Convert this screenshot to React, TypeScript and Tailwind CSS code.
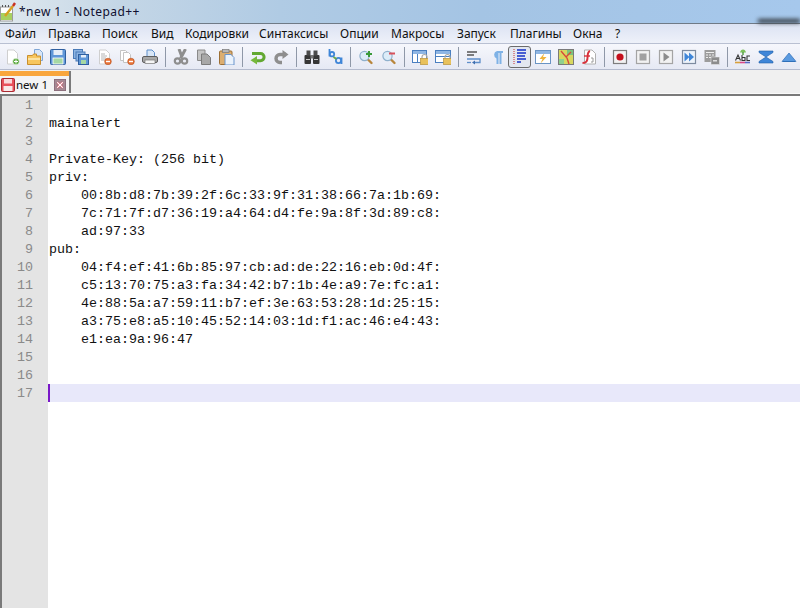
import React from "react";

const Doc = ({ c = "#fff" }: { c?: string }) => (
  <path d="M3.5 1h6.500l3.500 3.500V15h-10z" fill={c} stroke="#cfcfcf" />
);
const Minus = () => (
  <g>
    <circle cx="12" cy="12.5" r="3.3" fill="#e8743a" stroke="#b5501f" strokeWidth=".6" />
    <rect x="10" y="11.8" width="4" height="1.4" fill="#fff" />
  </g>
);
const Lines = () => <path d="M5 5h4M5 7h6M5 9h5M5 11h4" stroke="#b4b4b4" strokeWidth="1" />;
const Lock = () => (
  <g>
    <path d="M10 9.500V8a2.500 2.500 0 0 1 5 0v1.500" fill="none" stroke="#a8a8a8" strokeWidth="1.2" />
    <rect x="8.500" y="9.500" width="8" height="6" fill="#e8c15c" stroke="#b8923a" strokeWidth=".7" />
  </g>
);
const Mag = ({ plus }: { plus: boolean }) => (
  <g>
    <path d="M9.500 10l4 4" stroke="#b8863c" strokeWidth="2.400" strokeLinecap="round" />
    <circle cx="6.500" cy="7" r="4.600" fill="#dcecf8" stroke="#8fb0cc" strokeWidth="1.2" />
    {plus ? (
      <path d="M11 2v6M8 5h6" stroke="#3a9a3a" strokeWidth="2" />
    ) : (
      <path d="M8 4.500h6" stroke="#d8505a" strokeWidth="2" />
    )}
  </g>
);

const icons: React.ReactNode[] = [
  <g key="new"><Doc /><circle cx="12" cy="12.500" r="3.300" fill="#58a83c" stroke="#fff" strokeWidth=".6" /><path d="M10 12.500h4M12 10.500v4" stroke="#fff" strokeWidth="1" /></g>,
  <g key="open"><path d="M7.500.5h5l3 3v8h-8z" fill="#d8e6f7" stroke="#7fa6d6" /><path d="M.5 6.500h5l1-1.500h3v2h4v8.500h-13z" fill="#f7c65e" stroke="#c98f2c" /><path d="M1 10h12" stroke="#fbe3a4" strokeWidth="2" /></g>,
  <g key="save"><rect x=".5" y=".5" width="15" height="15" rx="1" fill="#5f97d8" stroke="#2f5f9f" /><rect x="3.500" y="1" width="9" height="5" fill="#e6eef8" /><rect x="3" y="9" width="10" height="6" fill="#a6d8a4" stroke="#fff" strokeWidth=".8" /></g>,
  <g key="saveall"><rect x=".5" y=".5" width="9" height="9" fill="#8db4e2" stroke="#4a7bb8" /><rect x="3" y="3" width="9" height="9" fill="#8db4e2" stroke="#4a7bb8" /><rect x="5.500" y="5.500" width="10" height="10" fill="#5f97d8" stroke="#2f5f9f" /><rect x="8" y="11" width="5" height="4" fill="#a6d8a4" /><rect x="8" y="6" width="5" height="2.500" fill="#e6eef8" /></g>,
  <g key="close"><Doc /><Lines /><Minus /></g>,
  <g key="closeall"><path d="M1.500 1.500h5l2 2v8h-7z" fill="#fff" stroke="#c4c4c4" /><path d="M4.500 3.500h5l2 2v8h-7z" fill="#fff" stroke="#c4c4c4" /><Minus /></g>,
  <g key="print"><path d="M5 1h5l2.500 2.500V8H5z" fill="#d8e6f7" stroke="#5f8fca" /><rect x=".5" y="7.500" width="15" height="6" rx="1.500" fill="#a8a8a8" stroke="#5e5e5e" /><rect x="3" y="11" width="10" height="3.500" fill="#f5f5f5" stroke="#777" strokeWidth=".7" /></g>,
  null,
  <g key="cut"><path d="M6 0l3 8M12.500 0L7.500 9.500" stroke="#8e8e8e" strokeWidth="3" /><circle cx="4.500" cy="12" r="2.700" fill="none" stroke="#8e8e8e" strokeWidth="2.200" /><circle cx="11.500" cy="12" r="2.700" fill="none" stroke="#8e8e8e" strokeWidth="2.200" /></g>,
  <g key="copy"><path d="M1.500 1h7.500v10.500H1.500z" fill="#c4c4c4" stroke="#8a8a8a" /><path d="M5.500 5h5.500l3.500 3.500v7h-9z" fill="#a8a8a8" stroke="#7c7c7c" /></g>,
  <g key="paste"><rect x=".5" y="2" width="12.500" height="13.500" rx="1" fill="#dcae70" stroke="#9c6f34" /><rect x="3.500" y=".5" width="6.500" height="3" fill="#b8b8b8" stroke="#7a7a7a" strokeWidth=".7" /><path d="M6 5.500h6l3 3v7.500h-9z" fill="#eaf2fc" stroke="#6a95cc" /></g>,
  null,
  <g key="undo"><path d="M2 4.500h8.500a3.600 3.600 0 0 1 0 7.200H5.500" fill="none" stroke="#62a832" strokeWidth="3" /><path d="M7 7v8.500L.5 11.200z" fill="#76b83c" /></g>,
  <g key="redo"><path d="M13 5.500H7a4 4 0 0 0 0 8h2" fill="none" stroke="#8e8e8e" strokeWidth="3.400" /><path d="M9.500 1v9l6-4.500z" fill="#8e8e8e" /></g>,
  null,
  <g key="find"><rect x=".5" y="6" width="6.500" height="9" rx="1" fill="#363636" /><rect x="9" y="6" width="6.500" height="9" rx="1" fill="#363636" /><rect x="2.500" y="1.500" width="4" height="5" fill="#4c4c4c" /><rect x="9.500" y="1.500" width="4" height="5" fill="#4c4c4c" /><rect x="6.500" y="6" width="3" height="3.500" fill="#777" /><path d="M2 10.500h4M10 10.500h4" stroke="#c4c4c4" /></g>,
  <g key="replace"><path d="M2.500 0v7.500" stroke="#3f86d8" strokeWidth="1.800" /><circle cx="5" cy="5.200" r="2.200" fill="none" stroke="#3f86d8" strokeWidth="1.800" /><circle cx="11.500" cy="11.500" r="2.600" fill="none" stroke="#3f86d8" strokeWidth="1.800" /><path d="M14.500 8.500v6.500" stroke="#3f86d8" strokeWidth="1.800" /><path d="M6.500 8l3 2" stroke="#6aa84a" strokeWidth="2" /></g>,
  null,
  <g key="zi"><Mag plus /></g>,
  <g key="zo"><Mag plus={false} /></g>,
  null,
  <g key="s1"><rect x=".5" y="1.500" width="14" height="12" fill="#fff" stroke="#4a7fc0" /><rect x="1" y="2" width="13" height="3" fill="#8fb6e4" /><path d="M5.500 5v8" stroke="#4a7fc0" /><Lock /></g>,
  <g key="s2"><rect x=".5" y="1.500" width="15" height="12" fill="#fff" stroke="#4a7fc0" /><rect x="1" y="2" width="14" height="3" fill="#8fb6e4" /><path d="M.5 7.500h15" stroke="#4a7fc0" /><Lock /></g>,
  null,
  <g key="wrap"><path d="M1 3h10M1 6h7" stroke="#555" strokeWidth="1.300" /><path d="M1 10h13v3.500H8" fill="none" stroke="#5f8fca" strokeWidth="1.300" /><path d="M1 13.500h4" stroke="#5f8fca" strokeWidth="1.300" /><path d="M9 11.500v4l-3-2z" fill="#3f6fb0" /></g>,
  <g key="pil"><path d="M8 2h6v2h-1.500v11h-2V4H9.500v11h-2V9.500a4 4 0 0 1 .5-7.500z" fill="#7fb2e6" /></g>,
  "active",
  <g key="lang"><rect x=".5" y="1.500" width="15" height="13" fill="#fff" stroke="#6a94c4" /><rect x="1" y="2" width="14" height="3" fill="#8fb6e4" /><path d="M9.500 4l-5 6h3l-2 4.500 6-6.500H8z" fill="#f0b43c" /></g>,
  <g key="map"><rect x=".5" y=".5" width="15" height="15" fill="#d8d860" stroke="#7a7a7a" /><rect x="9" y="1" width="6" height="5" fill="#7cc47c" /><rect x="1" y="10" width="5" height="5" fill="#8fd08f" /><path d="M3 2l6 7 2 6M13 3L8 8" stroke="#d84a3a" strokeWidth="1.400" fill="none" /></g>,
  <g key="fn"><path d="M3.500 1h7.500l3.500 3.500V15H3.500z" fill="#fff" stroke="#b0b0b0" /><path d="M9 2C5 3 8 9 5.500 12.500 4.500 14 3 14 1.500 14" fill="none" stroke="#d8323c" strokeWidth="2" /><path d="M3 7h6" stroke="#d8323c" strokeWidth="1.400" /><path d="M10 9h2v4h-2" fill="none" stroke="#999" /></g>,
  null,
  <g key="rec"><rect x="1.500" y="1.500" width="13" height="13" fill="#f2f2f2" stroke="#7d7d7d" strokeWidth="1.200" /><circle cx="8" cy="8" r="3.600" fill="#c4101c" /></g>,
  <g key="stop"><rect x="1.500" y="1.500" width="13" height="13" fill="#f2f2f2" stroke="#a4a4a4" strokeWidth="1.200" /><rect x="4.500" y="4.500" width="7" height="7" fill="#a0a0a0" /></g>,
  <g key="play"><rect x="1.500" y="1.500" width="13" height="13" fill="#f2f2f2" stroke="#a4a4a4" strokeWidth="1.200" /><path d="M5.500 3.500v9l6-4.500z" fill="#8c8c8c" /></g>,
  <g key="ff"><rect x="1.500" y="1.500" width="13" height="13" fill="#eef3fa" stroke="#7d8ba0" strokeWidth="1.200" /><path d="M3.500 3.500v9l5-4.500z" fill="#3f86d8" /><path d="M8 3.500v9l5-4.500z" fill="#3f86d8" /></g>,
  <g key="savem"><rect x=".5" y="1" width="11" height="12" fill="#9c9c9c" /><path d="M2 3.500h8M2 6h2M5 6h2M8 6h2M2 8.500h2M5 8.500h2" stroke="#eee" /><rect x="7" y="8" width="8.500" height="7.500" fill="#8c8c8c" stroke="#eee" strokeWidth=".5" /><rect x="9" y="11" width="4" height="1.500" fill="#ddd" /></g>,
  null,
  <g key="spell"><path d="M5 3.500C5.500 1.500 6.500.5 8 .5s2.500 1 3 3z" fill="#7cc05a" /><path d="M8 3v3" stroke="#4a9a3a" strokeWidth="1.400" /><path d="M0.500 11.500L3 6l2.500 5.500M1.500 9.500h3M7 6v5.500h3V8.500H7M15 7h-3v4.500h3" fill="none" stroke="#333" strokeWidth="1.100" /><path d="M0 13.500h5" stroke="#d8a03c" strokeWidth="1.600" /><path d="M5 13.500h5" stroke="#d84a8a" strokeWidth="1.600" /><path d="M10 13.500h5" stroke="#5a6ac8" strokeWidth="1.600" /></g>,
  <g key="up2"><path d="M1 2h14v1.500L8 8 1 3.500z" fill="#3f86d8" stroke="#1f5fa8" strokeWidth=".6" /><path d="M1 14h14v-1.500L8 8l-7 4.500z" fill="#3f86d8" stroke="#1f5fa8" strokeWidth=".6" /></g>,
  <g key="up"><path d="M1 12.500h14L8 4z" fill="#5a9ae0" stroke="#2f6fb8" strokeWidth=".7" /><path d="M2 12.500h12" stroke="#2f6fb8" /></g>,
];

const menu: [string, string][] = [
  ["Файл", "w-[43px]"],
  ["Правка", "w-[54px]"],
  ["Поиск", "w-[49px]"],
  ["Вид", "w-[34px]"],
  ["Кодировки", "w-[74px]"],
  ["Синтаксисы", "w-[81px]"],
  ["Опции", "w-[51px]"],
  ["Макросы", "w-[66px]"],
  ["Запуск", "w-[53px]"],
  ["Плагины", "w-[63px]"],
  ["Окна", "w-[42px]"],
  ["?", "w-[10px]"],
];

const lines: string[] = [
  "",
  "mainalert",
  "",
  "Private-Key: (256 bit)",
  "priv:",
  "    00:8b:d8:7b:39:2f:6c:33:9f:31:38:66:7a:1b:69:",
  "    7c:71:7f:d7:36:19:a4:64:d4:fe:9a:8f:3d:89:c8:",
  "    ad:97:33",
  "pub:",
  "    04:f4:ef:41:6b:85:97:cb:ad:de:22:16:eb:0d:4f:",
  "    c5:13:70:75:a3:fa:34:42:b7:1b:4e:a9:7e:fc:a1:",
  "    4e:88:5a:a7:59:11:b7:ef:3e:63:53:28:1d:25:15:",
  "    a3:75:e8:a5:10:45:52:14:03:1d:f1:ac:46:e4:43:",
  "    e1:ea:9a:96:47",
  "",
  "",
  "",
];

function ToolIcon({ node }: { node: React.ReactNode }) {
  if (node === null) {
    return (
      <div className="flex w-[8px] h-[22px] justify-center items-center">
        <div className="w-px h-[20px] bg-[#8f98a8]" />
      </div>
    );
  }
  if (node === "active") {
    return (
      <div className="flex w-[23px] h-[22px] items-center justify-center rounded-[3px] border border-[#6b6b6b] bg-[#e3e7f0]">
        <svg width="16" height="16" viewBox="0 0 16 16">
          <path d="M5 1h9M5 4h9M5 7h8M5 10h9M5 13h4" stroke="#1430c8" strokeWidth="1.600" />
          <path d="M2 0v16" stroke="#c83030" strokeDasharray="1 1" />
        </svg>
      </div>
    );
  }
  return (
    <div className="flex w-[23px] h-[22px] items-center justify-center shrink-0">
      <svg width="16" height="16" viewBox="0 0 16 16">
        {node}
      </svg>
    </div>
  );
}

export default function App() {
  return (
    <div className="w-[800px] h-[608px] overflow-hidden flex flex-col bg-white font-['Noto_Sans',sans-serif]">
      <div className="relative h-[23px] shrink-0 flex items-center bg-[linear-gradient(90deg,#dfe8ee_0%,#c4d6e6_15%,#b0cbe4_35%,#a4c4e4_60%,#a6c8ec_100%)]">
        <div className="absolute right-0 top-[19px] w-[42px] h-[4px] bg-[#30363c] blur-[2px]" />
        <svg width="18" height="23" viewBox="0 0 18 23" className="shrink-0">
          <rect x=".5" y="7" width="12" height="14" fill="#fff" stroke="#9a9a9a" />
          <rect x="1" y="13" width="11" height="7" fill="#a8d060" />
          <path d="M5 16L13 6" stroke="#d8a020" strokeWidth="2.400" />
          <path d="M13 6l2-3" stroke="#c83020" strokeWidth="2.400" />
          <path d="M2.500 7V5M5.500 7V5M8.500 7V5" stroke="#555" />
        </svg>
        <span className="relative ml-px text-[12px] tracking-[0.45px] leading-[20px] text-[#101030]">*new 1 - Notepad++</span>
      </div>

      <div className="h-px shrink-0 bg-[#6f7a86]" />
      <div className="h-[20px] shrink-0 flex items-center pl-[5px] bg-[linear-gradient(180deg,#dce3f3,#eef1f9)] border-b border-[#b9c0d2] text-[12px] text-[#101010]">
        {menu.map(([label, w]) => (
          <span key={label} className={`${w} shrink-0 whitespace-nowrap`}>
            {label}
          </span>
        ))}
      </div>

      <div className="h-[26px] shrink-0 flex items-center bg-[linear-gradient(180deg,#f6f7fc,#e6e9f4)] border-b border-[#b4bbce]">
        {icons.map((n, i) => (
          <ToolIcon key={i} node={n} />
        ))}
      </div>

      <div className="h-[23px] shrink-0 flex bg-[#f0f0f0] pt-px">
        <div className="w-[71px] flex flex-col border-r-2 border-[#7a7a7a]">
          <div className="h-[5px] shrink-0 bg-[#f9a63c]" />
          <div className="flex-1 flex items-center bg-[#f4f4f4]">
            <svg width="14" height="14" viewBox="0 0 14 14" className="shrink-0 ml-px">
              <rect x=".5" y=".5" width="13" height="13" rx="1" fill="#e8505a" stroke="#a82a32" />
              <rect x="3" y="1" width="8" height="4.500" fill="#f8d8da" />
              <rect x="2.500" y="8" width="9" height="5" fill="#f8e8e8" />
            </svg>
            <span className="ml-px w-[32px] text-[11.5px] leading-[16px] whitespace-nowrap text-[#101010]">new 1</span>
            <svg width="12" height="12" viewBox="0 0 13 13" className="shrink-0 ml-[6px]">
              <rect x=".5" y=".5" width="12" height="12" fill="#a58a94" stroke="#8a6a78" />
              <path d="M3.500 3.500l6 6M9.500 3.500l-6 6" stroke="#c8283c" strokeWidth="2.400" />
              <path d="M3.500 3.500l6 6M9.500 3.500l-6 6" stroke="#fff" strokeWidth="1.400" />
            </svg>
          </div>
        </div>
      </div>

      <div className="h-px shrink-0 bg-[#fafafa]" />
      <div className="h-[2px] shrink-0 bg-[#7a7a7a]" />

      <div className="flex-1 flex border-l-2 border-[#7a7a7a] bg-white overflow-hidden">
        <div className="w-[46px] shrink-0 bg-[#e4e4e4]">
          {lines.map((_, i) => (
            <div
              key={i}
              className="h-[18px] pt-px pr-[15px] text-right font-['Liberation_Mono',monospace] text-[13.33px] leading-[18px] text-[#8a8a8a]"
            >
              {i + 1}
            </div>
          ))}
        </div>
        <div className="flex-1 font-['Liberation_Mono',monospace] text-[13.33px] leading-[18px] text-[#111]">
          {lines.map((l, i) => (
            <div
              key={i}
              className={
                i === 16
                  ? "h-[18px] pt-px whitespace-pre pl-px bg-[#e8e8fa] border-l-2 border-[#7a18c8]"
                  : "h-[18px] pt-px whitespace-pre pl-px"
              }
            >
              {l}
            </div>
          ))}
        </div>
      </div>
    </div>
  );
}
